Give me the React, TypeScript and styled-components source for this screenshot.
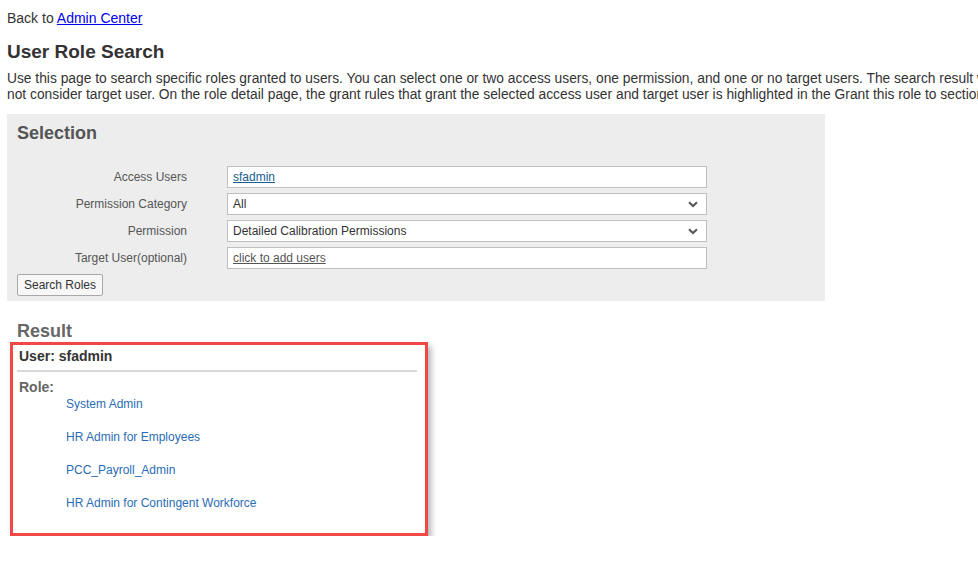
import React from "react";
import styled, { createGlobalStyle } from "styled-components";

const Global = createGlobalStyle`
  html, body { margin: 0; padding: 0; background: #fff; overflow: hidden; }
  body { font-family: "Liberation Sans", Arial, sans-serif; color: #333; }
`;

const Page = styled.div`
  padding: 9px 7px 0 7px;
  width: 1400px;
`;

const BackLine = styled.div`
  font-size: 14px;
  line-height: 18px;
  color: #333;
  a { color: #0000ee; text-decoration: underline; }
`;

const Title = styled.h1`
  margin: 13px 0 0 0;
  font-size: 19px;
  line-height: 24px;
  font-weight: bold;
  color: #333;
`;

const Intro = styled.div`
  margin-top: 7px;
  font-size: 13.8px;
  line-height: 16px;
  color: #333;
`;

const IntroLine = styled.span`
  display: block;
  white-space: nowrap;
`;

const Panel = styled.section`
  margin-top: 11px;
  width: 818px;
  box-sizing: border-box;
  background: #ededed;
  padding: 8px 10px 5px 10px;
`;

const PanelTitle = styled.h2`
  margin: 0;
  font-size: 18px;
  line-height: 22px;
  font-weight: bold;
  color: #555;
`;

const Form = styled.div`
  margin-top: 22px;
  display: grid;
  grid-template-columns: 170px 480px;
  column-gap: 40px;
  row-gap: 5px;
  align-items: center;
`;

const Label = styled.label`
  font-size: 12px;
  color: #555;
  text-align: right;
`;

const Field = styled.div`
  height: 22px;
  box-sizing: border-box;
  border: 1px solid #bfbfbf;
  background: #fff;
  display: flex;
  align-items: center;
  justify-content: space-between;
  padding: 0 8px 0 5px;
  font-size: 12px;
  color: #333;
`;

const FieldLink = styled.a<{ $tone: "blue" | "gray" }>`
  color: ${(p) => (p.$tone === "blue" ? "#15608f" : "#555")};
  text-decoration: underline;
  cursor: pointer;
`;

const Chevron = styled.svg`
  width: 10px;
  height: 7px;
  display: block;
`;

const Button = styled.button`
  margin-top: 5px;
  height: 22px;
  width: 86px;
  padding: 0;
  border: 1px solid #a8a8a8;
  border-radius: 2px;
  background: #f7f7f7;
  font-family: inherit;
  font-size: 12px;
  color: #333;
  display: block;
`;

const ResultTitle = styled.h2`
  margin: 19px 0 0 10px;
  font-size: 18px;
  line-height: 22px;
  font-weight: bold;
  color: #666;
`;

const ResultBox = styled.div`
  margin: 0 0 0 3px;
  width: 418px;
  height: 194px;
  box-sizing: border-box;
  border: 3px solid #f24747;
  box-shadow: 3px 4px 6px rgba(0, 0, 0, 0.3);
  padding: 2px 8px 0 4px;
`;

const UserHead = styled.div`
  font-size: 14px;
  line-height: 18px;
  font-weight: bold;
  color: #333;
  padding: 0 0 5px 2px;
  border-bottom: 2px solid #d9d9d9;
`;

const RoleHead = styled.div`
  margin-top: 6px;
  padding-left: 2px;
  font-size: 14px;
  line-height: 18px;
  font-weight: bold;
  color: #666;
`;

const RoleList = styled.ul`
  list-style: none;
  margin: 0;
  padding: 0 0 0 49px;
  display: flex;
  flex-direction: column;
  gap: 17px;
`;

const RoleLink = styled.a`
  font-size: 12px;
  line-height: 16px;
  color: #2a6db5;
  text-decoration: none;
  display: block;
`;

const ChevronIcon = () => (
  <Chevron viewBox="0 0 10 7">
    <path d="M1 1.2 L5 5 L9 1.2" fill="none" stroke="#555" strokeWidth="2" />
  </Chevron>
);

const roles = [
  "System Admin",
  "HR Admin for Employees",
  "PCC_Payroll_Admin",
  "HR Admin for Contingent Workforce",
];

export default function App() {
  return (
    <>
      <Global />
      <Page>
        <BackLine>
          Back to <a href="#">Admin Center</a>
        </BackLine>
        <Title>User Role Search</Title>
        <Intro>
          <IntroLine>
            Use this page to search specific roles granted to users. You can select one or two access users, one permission, and one or no target users. The search result will
          </IntroLine>
          <IntroLine>
            not consider target user. On the role detail page, the grant rules that grant the selected access user and target user is highlighted in the Grant this role to section.
          </IntroLine>
        </Intro>
        <Panel>
          <PanelTitle>Selection</PanelTitle>
          <Form>
            <Label>Access Users</Label>
            <Field>
              <FieldLink $tone="blue">sfadmin</FieldLink>
            </Field>
            <Label>Permission Category</Label>
            <Field>
              <span>All</span>
              <ChevronIcon />
            </Field>
            <Label>Permission</Label>
            <Field>
              <span>Detailed Calibration Permissions</span>
              <ChevronIcon />
            </Field>
            <Label>Target User(optional)</Label>
            <Field>
              <FieldLink $tone="gray">click to add users</FieldLink>
            </Field>
          </Form>
          <Button>Search Roles</Button>
        </Panel>
        <ResultTitle>Result</ResultTitle>
        <ResultBox>
          <UserHead>User: sfadmin</UserHead>
          <RoleHead>Role:</RoleHead>
          <RoleList>
            {roles.map((r) => (
              <li key={r}>
                <RoleLink href="#">{r}</RoleLink>
              </li>
            ))}
          </RoleList>
        </ResultBox>
      </Page>
    </>
  );
}
